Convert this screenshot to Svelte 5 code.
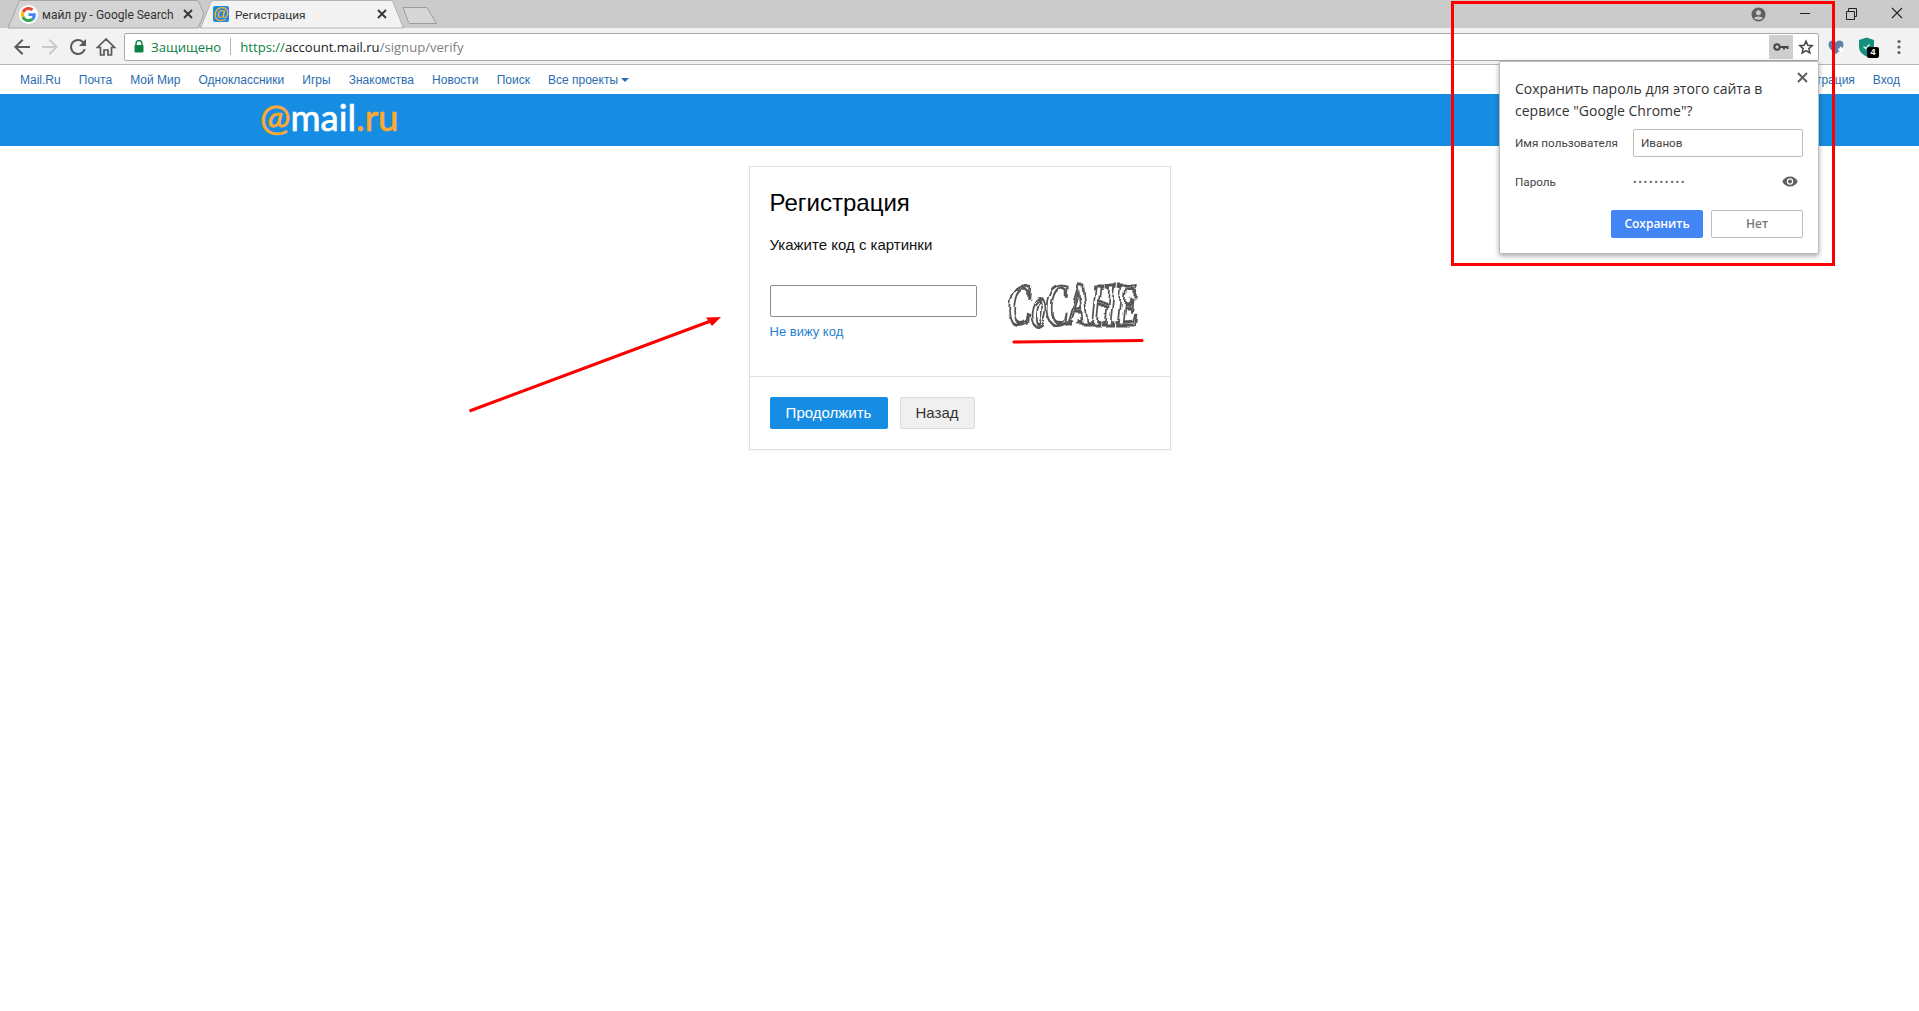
<script lang="ts">
  const navLinks = ['Mail.Ru', 'Почта', 'Мой Мир', 'Одноклассники', 'Игры', 'Знакомства', 'Новости', 'Поиск'];
</script>

<div class="page">
  <div class="tabstrip">
    <div class="tab">
      <svg class="tab-shape" viewBox="0 0 196 28" preserveAspectRatio="none"><path d="M0 28 L11 1.500 Q12 .5 14 .5 H188 Q190 .5 191 2 L196 14 L190 28 Z" fill="#d4d4d4" stroke="#a6a6a6"/></svg>
      <svg class="favicon" viewBox="-6 -6 60 60">
        <circle cx="24" cy="24" r="30" fill="#fff"/>
        <path fill="#EA4335" d="M24 9.500c3.500 0 6.700 1.200 9.200 3.600l6.900-6.900C35.900 2.400 30.500 0 24 0 14.600 0 6.500 5.400 2.600 13.200l8 6.200C12.400 13.700 17.700 9.500 24 9.500z"/>
        <path fill="#4285F4" d="M47 24.500c0-1.600-.1-3.100-.4-4.500H24v9h12.900c-.6 3-2.200 5.500-4.700 7.200l7.700 6C44.400 38 47 31.800 47 24.500z"/>
        <path fill="#FBBC05" d="M10.500 28.600c-.5-1.400-.8-3-.8-4.600s.3-3.200.8-4.600l-8-6.200C.9 16.500 0 20.100 0 24s.9 7.500 2.600 10.800l7.900-6.200z"/>
        <path fill="#34A853" d="M24 48c6.500 0 11.900-2.100 15.900-5.800l-7.700-6c-2.100 1.400-4.900 2.300-8.200 2.300-6.300 0-11.600-4.200-13.500-9.900l-8 6.200C6.500 42.600 14.600 48 24 48z"/>
      </svg>
      <span class="tab-title">майл ру - Google Search</span>
      <svg class="tab-close" viewBox="0 0 10 10"><path d="M1 1 L9 9 M9 1 L1 9" stroke="#333" stroke-width="1.800"/></svg>
    </div>
    <div class="tab active">
      <svg class="tab-shape" viewBox="0 0 204 29" preserveAspectRatio="none"><path d="M0 28 H1 L11 2 Q12 .5 14 .5 H190 Q192 .5 193 2 L203 28 H204 V29 H0 Z" fill="#f2f2f2" stroke="#a6a6a6" stroke-width=".8"/></svg>
      <span class="mailicon">@</span>
      <span class="tab-title">Регистрация</span>
      <svg class="tab-close" viewBox="0 0 10 10"><path d="M1 1 L9 9 M9 1 L1 9" stroke="#333" stroke-width="1.800"/></svg>
    </div>
    <svg class="newtab" width="36" height="19" viewBox="0 0 36 19"><path d="M1 1.500 H25 L34.500 17.500 H8 Q7 17.500 6.500 16.500 Z" fill="#d6d6d6" stroke="#9c9c9c"/></svg>
    <div class="window-controls">
      <svg class="avatar" width="15" height="15" viewBox="0 0 15 15"><circle cx="7.500" cy="7.500" r="7" fill="#5f5f5f"/><circle cx="7.500" cy="5.700" r="2.500" fill="#cbcbcb"/><path d="M3 11.500 C4 8.800 11 8.800 12 11.500 C10.500 13 4.500 13 3 11.500Z" fill="#cbcbcb"/></svg>
      <svg class="wc" width="46" height="28" viewBox="0 0 46 28"><path d="M18 13.500 H28" stroke="#222"/></svg>
      <svg class="wc" width="46" height="28" viewBox="0 0 46 28"><path d="M18.500 11.500 H26.500 V19.500 H18.500Z M20.500 11.500 V8.500 H28.500 V16.500 H26.500" fill="none" stroke="#222"/></svg>
      <svg class="wc" width="46" height="28" viewBox="0 0 46 28"><path d="M18 8 L28 18 M28 8 L18 18" stroke="#222" stroke-width="1.100"/></svg>
    </div>
  </div>

  <div class="toolbar">
    <svg class="tb" width="28" height="28" viewBox="0 0 24 24"><path d="M20 11H7.800l5.600-5.600L12 4l-8 8 8 8 1.400-1.400L7.800 13H20z" fill="#5a5a5a"/></svg>
    <svg class="tb" width="28" height="28" viewBox="0 0 24 24"><path d="M4 11h12.200l-5.600-5.600L12 4l8 8-8 8-1.400-1.400 5.600-5.600H4z" fill="#c9c9c9"/></svg>
    <svg class="tb" width="28" height="28" viewBox="0 0 24 24"><path d="M17.650 6.350A7.960 7.960 0 0 0 12 4a8 8 0 1 0 7.730 10h-2.080A6 6 0 1 1 12 6c1.660 0 3.140.69 4.220 1.780L13 11h7V4z" fill="#5a5a5a"/></svg>
    <svg class="tb" width="28" height="28" viewBox="0 0 24 24"><path d="M12 4 3.500 12.500H6.500V20H10V15H14V20H17.500V12.500H20.500Z" fill="none" stroke="#5a5a5a" stroke-width="1.700" stroke-linejoin="miter"/></svg>
    <div class="omnibox">
      <svg class="lock" width="10" height="13" viewBox="0 0 10 13"><path d="M2 5V3.500a3 3 0 0 1 6 0V5" fill="none" stroke="#0b8043" stroke-width="1.400"/><rect x="0.500" y="5" width="9" height="7.500" rx="1" fill="#0b8043"/></svg>
      <span class="secure">Защищено</span>
      <span class="sep"></span>
      <span class="url"><span class="scheme">https://</span><span class="host">account.mail.ru</span><span class="path">/signup/verify</span></span>
      <span class="key">
        <svg width="16" height="8" viewBox="0 0 16 8"><circle cx="4" cy="4" r="2.700" fill="none" stroke="#444" stroke-width="2"/><path d="M6 3H15.500V6H13.500V5H12V6.500H10V5H6Z" fill="#444"/></svg>
      </span>
      <svg class="star" width="16" height="16" viewBox="0 0 24 24"><path d="M12 3.200 14.700 9.300 21.300 10 16.300 14.400 17.800 20.900 12 17.500 6.200 20.900 7.700 14.400 2.700 10 9.300 9.300Z" fill="none" stroke="#444" stroke-width="2.200"/></svg>
    </div>
    <div class="extensions">
      <svg class="ext" width="18" height="18" viewBox="0 0 18 18"><path d="M9 16 C4 12 1.500 9.500 1.500 6.500 C1.500 4 3.500 2.500 5.500 2.500 C7 2.500 8.300 3.300 9 4.500 C9.700 3.300 11 2.500 12.500 2.500 C14.500 2.500 16.500 4 16.500 6.500 C16.500 9.500 14 12 9 16Z" fill="#5d7fa8"/><path d="M11 11.500H16.500M13.700 8.800V14.300" stroke="#fff" stroke-width="1.800"/></svg>
      <span class="shield-wrap">
        <svg width="17" height="20" viewBox="0 0 17 20"><path d="M8.500 .5 L16 3 V10 C16 14.500 12.500 17.500 8.500 19.500 C4.500 17.500 1 14.500 1 10 V3Z" fill="#13917d"/><path d="M5.500 9.500 L7.700 11.500 L11.500 7.500" fill="none" stroke="#d9f3ee" stroke-width="1.300"/></svg>
        <span class="badge">4</span>
      </span>
      <svg class="menu" width="4" height="16" viewBox="0 0 4 16"><circle cx="2" cy="2.500" r="1.600" fill="#5f5f5f"/><circle cx="2" cy="8" r="1.600" fill="#5f5f5f"/><circle cx="2" cy="13.500" r="1.600" fill="#5f5f5f"/></svg>
    </div>
  </div>

  <nav class="portal">
    {#each navLinks as link}
      <span class="plink">{link}</span>
    {/each}
    <span class="plink">Все проекты<i class="caret"></i></span>
    <span class="pright">
      <span class="plink">Регистрация</span>
      <span class="plink">Вход</span>
    </span>
  </nav>

  <header class="brand">
    <span class="logo"><span class="o at">@</span><span class="w">mail</span><span class="o">.ru</span></span>
  </header>

  <main class="card">
    <div class="card-body">
      <h1>Регистрация</h1>
      <p class="hint">Укажите код с картинки</p>
      <div class="code-row">
        <div class="code-left">
          <div class="code-input"></div>
          <span class="nosee">Не вижу код</span>
        </div>
        <svg class="captcha" width="140" height="84" viewBox="0 0 140 84">
          <filter id="wobble" x="-5%" y="-10%" width="110%" height="120%">
            <feTurbulence type="fractalNoise" baseFrequency="0.05" numOctaves="2" seed="4"/>
            <feDisplacementMap in="SourceGraphic" scale="9"/>
          </filter>
          <g filter="url(#wobble)">
            <text class="captcha-text" transform="translate(3 62) scale(1 1.800)">CoCAHE</text>
          </g>
        </svg>
      </div>
    </div>
    <div class="card-foot">
      <button class="btn primary">Продолжить</button>
      <button class="btn back">Назад</button>
    </div>
  </main>

  <!-- annotations drawn over the page -->
  <svg class="marks" width="1919" height="1011" viewBox="0 0 1919 1011">
    <path d="M469.500 411 L712 320.500" stroke="#f00" stroke-width="3" fill="none"/>
    <path d="M721 317 L706 317.500 L712 326Z" fill="#f00"/>
    <path d="M1014 342 Q1080 341.500 1142 340.500" stroke="#f00" stroke-width="3.200" fill="none" stroke-linecap="round"/>
  </svg>

  <aside class="bubble">
    <svg class="bubble-x" width="11" height="11" viewBox="0 0 11 11"><path d="M1 1 L10 10 M10 1 L1 10" stroke="#5f5f5f" stroke-width="2"/></svg>
    <p class="bubble-title">Сохранить пароль для этого сайта в сервисе "Google Chrome"?</p>
    <div class="bubble-row">
      <span class="bubble-label">Имя пользователя</span>
      <div class="bubble-input">Иванов</div>
    </div>
    <div class="bubble-row pass">
      <span class="bubble-label">Пароль</span>
      <span class="dots">••••••••••</span>
      <svg class="eye" width="16" height="11" viewBox="0 0 16 11"><path d="M8 .5C4.500.5 1.600 2.600.3 5.500 1.600 8.400 4.500 10.500 8 10.500S14.400 8.400 15.700 5.500C14.400 2.600 11.500.5 8 .5Z" fill="#5f5f5f"/><circle cx="8" cy="5.500" r="3.200" fill="#fff"/><circle cx="8" cy="5.500" r="2" fill="#5f5f5f"/></svg>
    </div>
    <div class="bubble-actions">
      <span class="bbtn save">Сохранить</span>
      <span class="bbtn no">Нет</span>
    </div>
  </aside>

  <div class="redbox"></div>
</div>

<style>
  :global(body) {
    margin: 0;
    background: #fff;
  }

  .page {
    position: relative;
    height: 1011px;
    overflow: hidden;
    background: #fff;
    font-family: "Liberation Sans", Arial, sans-serif;
  }

  /* браузер */
  .tabstrip {
    display: flex;
    align-items: flex-start;
    height: 28px;
    padding-left: 8px;
    background: #cbcbcb;
    font-family: Roboto, "Noto Sans", sans-serif;
  }

  .tab {
    position: relative;
    display: flex;
    align-items: center;
    width: 196px;
    height: 28px;
    padding: 0 0 0 11px;
    box-sizing: border-box;
    flex-shrink: 0;
  }

  .tab.active {
    width: 204px;
    margin-left: -4px;
    padding-left: 13px;
    z-index: 2;
  }

  .tab-shape {
    position: absolute;
    left: 0;
    top: 0;
    width: 100%;
    height: 100%;
    overflow: visible;
  }

  .favicon,
  .mailicon,
  .tab-title,
  .tab-close {
    position: relative;
  }

  .favicon {
    width: 19px;
    height: 19px;
    flex-shrink: 0;
  }

  .mailicon {
    width: 16px;
    height: 16px;
    flex-shrink: 0;
    border-radius: 2px;
    background: #168de2;
    color: #ffa930;
    font: bold 16px/15px "Liberation Sans", sans-serif;
    text-align: center;
  }

  .tab-title {
    flex: 1;
    margin-left: 4px;
    padding-top: 2px;
    font-size: 12px;
    color: #333;
    white-space: nowrap;
  }

  .tab.active .tab-title {
    margin-left: 6px;
    font-size: 11.800px;
  }

  .tab-close {
    width: 10px;
    height: 10px;
    margin-right: 11px;
    flex-shrink: 0;
  }

  .tab.active .tab-close {
    margin-right: 17px;
  }

  .newtab {
    margin: 6px 0 0 -2px;
  }

  .window-controls {
    display: flex;
    align-items: center;
    margin-left: auto;
    margin-right: -1px;
    height: 28px;
  }

  .avatar {
    margin-right: 16px;
  }

  .wc {
    width: 46px;
    flex-shrink: 0;
  }

  .toolbar {
    display: flex;
    align-items: center;
    height: 37px;
    box-sizing: border-box;
    padding: 1px 0 0 8px;
    background: #f2f2f2;
    border-bottom: 1px solid #b5b5b5;
    font-family: "Open Sans", "Noto Sans", sans-serif;
  }

  .tb {
    width: 28px;
    height: 24px;
    flex-shrink: 0;
  }

  .omnibox {
    display: flex;
    align-items: center;
    width: 1695px;
    height: 28px;
    margin-left: 4px;
    box-sizing: border-box;
    padding-left: 8px;
    background: #fff;
    border: 1px solid #a9a9a9;
    border-radius: 2px;
    font-size: 13.100px;
  }

  .lock {
    margin-left: 1px;
  }

  .secure {
    margin-left: 7px;
    color: #0b8043;
    white-space: nowrap;
  }

  .sep {
    width: 1px;
    height: 17px;
    margin: 0 9px;
    background: #b5b5b5;
  }

  .url {
    flex: 1;
    white-space: nowrap;
  }

  .scheme {
    color: #0b8043;
  }

  .host {
    color: #222;
  }

  .path {
    color: #808080;
  }

  .key {
    display: flex;
    align-items: center;
    justify-content: center;
    width: 24px;
    height: 24px;
    background: #cecece;
  }

  .star {
    margin: 0 4px 0 5px;
  }

  .extensions {
    position: relative;
    display: flex;
    align-items: center;
    flex: 1;
  }

  .ext {
    margin-left: 8px;
  }

  .shield-wrap {
    position: relative;
    display: flex;
    margin-left: 13px;
  }

  .badge {
    position: absolute;
    left: 9px;
    top: 10px;
    width: 12px;
    height: 11px;
    border-radius: 2px;
    background: #000;
    color: #fff;
    font: bold 9px/11px "Liberation Sans", sans-serif;
    text-align: center;
  }

  .menu {
    margin-left: 22px;
  }

  /* портальная навигация */
  .portal {
    display: flex;
    align-items: center;
    gap: 18.100px;
    height: 29px;
    padding: 0 19px 0 20px;
    box-sizing: border-box;
    background: #fff;
    font-size: 12px;
  }

  .plink {
    color: #2a6cb0;
    white-space: nowrap;
  }

  .pright {
    display: flex;
    gap: 18px;
    margin-left: auto;
  }

  .caret {
    display: inline-block;
    margin-left: 3px;
    vertical-align: 2px;
    border: 4px solid transparent;
    border-top-color: #2a6cb0;
    border-bottom: 0;
  }

  .brand {
    display: flex;
    align-items: center;
    height: 52px;
    padding: 0 0 5px 260px;
    box-sizing: border-box;
    background: #168de2;
  }

  .logo {
    font-family: Lato, "Open Sans", sans-serif;
    font-size: 36.500px;
    font-weight: 400;
    -webkit-text-stroke: 0.700px currentColor;
    line-height: 1;
    white-space: nowrap;
  }

  .logo .w {
    color: #fff;
  }

  .logo .o {
    color: #ffa930;
  }

  /* карточка */
  .card {
    width: 422px;
    margin: 20px auto 0;
    box-sizing: border-box;
    background: #fff;
    border: 1px solid #e0e0e0;
    box-shadow: 0 1px 2px rgba(0, 0, 0, 0.06);
  }

  .card-body {
    height: 210px;
    box-sizing: border-box;
    padding: 21px 20px 0;
    border-bottom: 1px solid #e0e0e0;
  }

  h1 {
    margin: 0;
    font-size: 24px;
    font-weight: 400;
    line-height: 30px;
    color: #000;
  }

  .hint {
    margin: 17px 0 0;
    font-size: 15px;
    line-height: 20px;
    color: #111;
  }

  .code-row {
    display: flex;
    align-items: flex-start;
    margin-top: 30px;
  }

  .code-input {
    width: 207px;
    height: 32px;
    box-sizing: border-box;
    border: 1px solid #8c8c8c;
    border-radius: 2px;
    background: #fff;
  }

  .nosee {
    display: block;
    margin-top: 7px;
    font-size: 13px;
    line-height: 16px;
    color: #1f7fd0;
  }

  .captcha {
    margin: -22px 0 -20px 28px;
    flex-shrink: 0;
  }

  .captcha-text {
    font-family: "Liberation Serif", serif;
    font-style: italic;
    font-weight: 700;
    font-size: 33px;
    fill: #fff;
    stroke: #555;
    stroke-width: 1.700;
  }

  .card-foot {
    display: flex;
    gap: 12px;
    height: 72px;
    box-sizing: border-box;
    padding: 20px 20px 0;
  }

  .btn {
    height: 32px;
    padding: 0 0 2px;
    border-radius: 2px;
    font: 15px "Liberation Sans", Arial, sans-serif;
  }

  .btn.primary {
    width: 118px;
    border: 0;
    background: #168de2;
    color: #fff;
  }

  .btn.back {
    width: 75px;
    border: 1px solid #dcdcdc;
    background: #f0f0f0;
    color: #333;
  }

  /* аннотации */
  .marks {
    position: absolute;
    left: 0;
    top: 0;
    pointer-events: none;
  }

  .redbox {
    position: absolute;
    left: 1451px;
    top: 1px;
    width: 384px;
    height: 265px;
    box-sizing: border-box;
    border: 3px solid #f00;
  }

  /* пузырь сохранения пароля */
  .bubble {
    position: absolute;
    left: 1499px;
    top: 61px;
    width: 320px;
    height: 193px;
    box-sizing: border-box;
    padding: 16px 15px 0;
    background: #fff;
    border: 1px solid #bdbdbd;
    border-radius: 2px;
    box-shadow: 0 2px 5px rgba(0, 0, 0, 0.35);
    font-family: "Open Sans", "Noto Sans", sans-serif;
  }

  .bubble-x {
    position: absolute;
    right: 10px;
    top: 10px;
  }

  .bubble-title {
    width: 270px;
    margin: 0;
    font-size: 14px;
    line-height: 22px;
    color: #333;
  }

  .bubble-row {
    display: flex;
    align-items: center;
    height: 28px;
    margin-top: 7px;
    font-family: Roboto, "Noto Sans", sans-serif;
    font-size: 11.700px;
    color: #444;
  }

  .bubble-row.pass {
    margin-top: 11px;
    position: relative;
  }

  .bubble-label {
    width: 118px;
    flex-shrink: 0;
  }

  .bubble-input {
    width: 170px;
    height: 28px;
    box-sizing: border-box;
    padding-left: 7px;
    border: 1px solid #bdbdbd;
    border-radius: 2px;
    line-height: 26px;
  }

  .dots {
    font-size: 11px;
    letter-spacing: 1.600px;
    color: #666;
  }

  .eye {
    position: absolute;
    right: 5px;
    top: 8px;
  }

  .bubble-actions {
    display: flex;
    justify-content: flex-end;
    gap: 8px;
    margin-top: 14px;
  }

  .bbtn {
    width: 92px;
    height: 28px;
    box-sizing: border-box;
    border-radius: 2px;
    font-size: 12px;
    font-weight: 600;
    line-height: 28px;
    text-align: center;
  }

  .bbtn.save {
    background: #4285f4;
    color: #fff;
  }

  .bbtn.no {
    border: 1px solid #bdbdbd;
    line-height: 26px;
    color: #777;
  }
</style>
